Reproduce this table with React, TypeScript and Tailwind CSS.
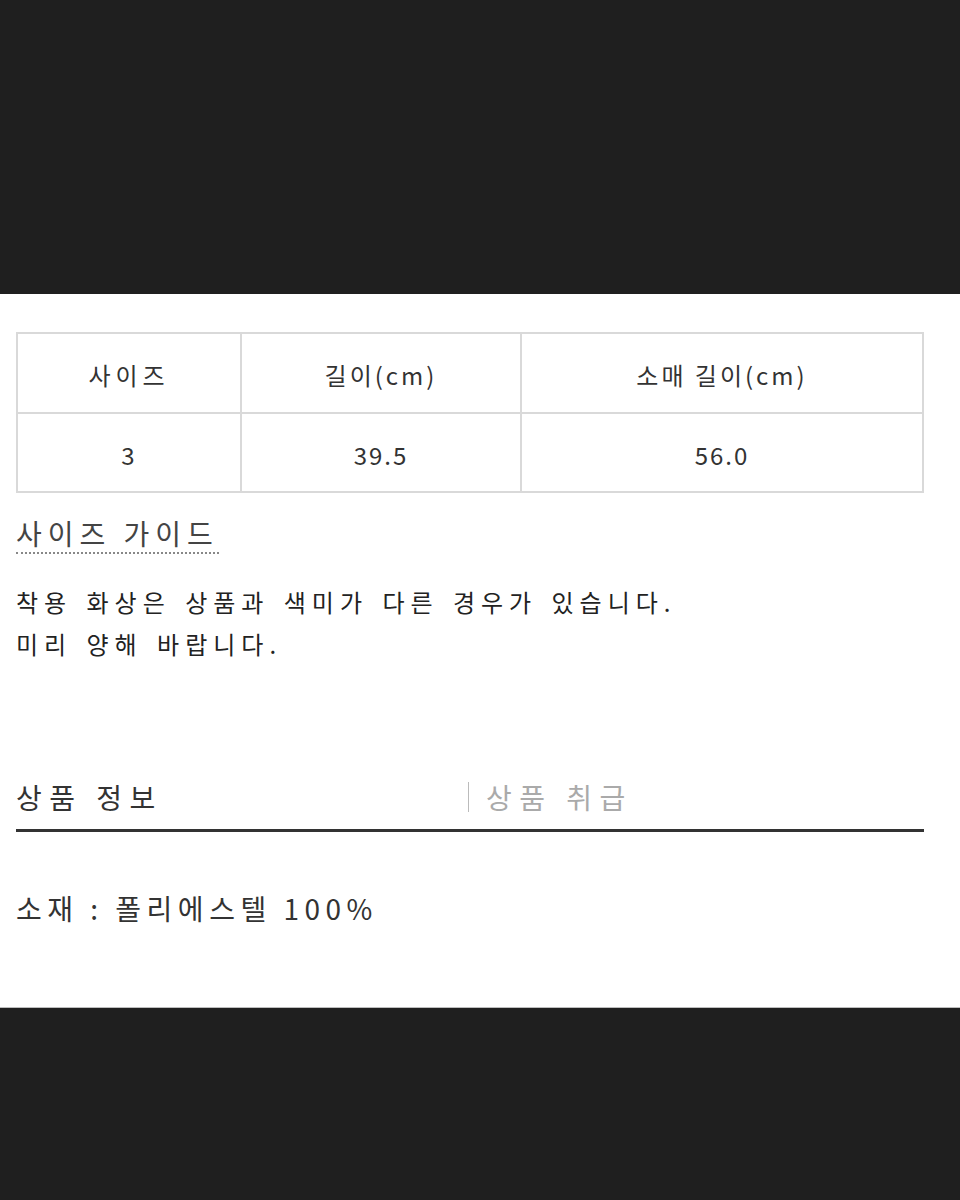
import React from "react";

const font = { fontFamily: '"Noto Sans CJK KR", "Noto Sans", sans-serif' };

export default function App() {
  const cell = "border-2 border-[#d9d9d9] pt-[4px]";
  return (
    <div className="w-[960px] h-[1200px] flex flex-col bg-[#1f1f1f]" style={font}>
      <div className="h-[294px] bg-[#1f1f1f]" />
      <div className="h-[714px] bg-white border-b border-[#bdbdbd] px-4 pt-[38px]">
        <table className="w-[908px] border-collapse text-[24px] text-[#333] text-center">
          <tbody>
            <tr className="h-[80px] tracking-[3px]">
              <td className={`w-[224px] ${cell} tracking-[5px]`}>사이즈</td>
              <td className={`w-[280px] ${cell}`}>길이(cm)</td>
              <td className={cell}>소매 길이(cm)</td>
            </tr>
            <tr className="h-[79px] tracking-[2px]">
              <td className={cell}>3</td>
              <td className={cell}>39.5</td>
              <td className={cell}>56.0</td>
            </tr>
          </tbody>
        </table>
        <div className="mt-[21px]">
          <span className="text-[28px] leading-[38px] text-[#444] tracking-[6px] border-b-2 border-dotted border-[#888] inline-block">
            사이즈 가이드
          </span>
        </div>
        <div className="mt-[27px] text-[24px] leading-[42px] text-[#222] tracking-[6px] [word-spacing:3px]">
          <div>착용 화상은 상품과 색미가 다른 경우가 있습니다.</div>
          <div>미리 양해 바랍니다.</div>
        </div>
        <div className="mt-[114px] w-[908px] flex items-end border-b-[3px] border-[#333] pb-[14px]">
          <div className="w-[452px] text-[28px] text-[#333] tracking-[7.5px] leading-[36px]">상품 정보</div>
          <div className="flex items-center">
            <div className="w-px h-[30px] bg-[#bbb] mr-[17px]" />
            <div className="text-[28px] text-[#aaa] tracking-[7.5px] leading-[36px]">상품 취급</div>
          </div>
        </div>
        <div className="mt-[58px] text-[28px] text-[#333] tracking-[5.5px] leading-[36px]">
          소재 : 폴리에스텔 100%
        </div>
      </div>
      <div className="flex-1 bg-[#1f1f1f]" />
    </div>
  );
}
